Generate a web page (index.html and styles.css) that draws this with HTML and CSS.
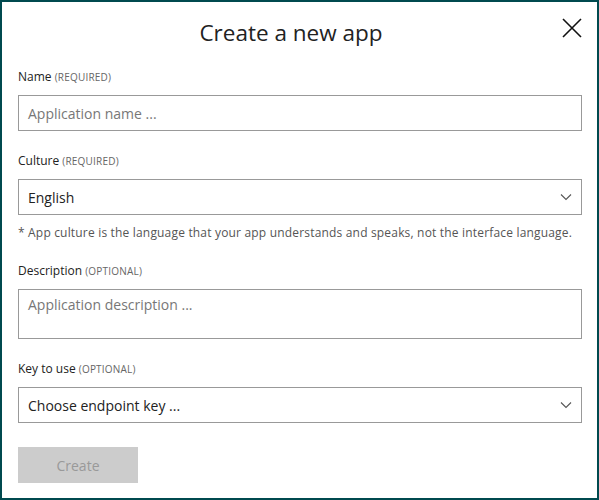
FILE: index.html
```html
<!DOCTYPE html>
<html>
<head>
<meta charset="utf-8">
<link rel="stylesheet" href="styles.css">
</head>
<body>
<div class="dialog">
  <div class="header">
    <h1 class="title">Create a new app</h1>
    <button class="close" aria-label="Close">
      <svg width="20" height="20" viewBox="0 0 20 20"><path d="M1 1 L19 19 M19 1 L1 19" stroke="#111" stroke-width="1.6" fill="none"/></svg>
    </button>
  </div>
  <div class="field">
    <div class="label">Name <span class="tag">(REQUIRED)</span></div>
    <div class="input placeholder">Application name ...</div>
  </div>
  <div class="field culture">
    <div class="label">Culture <span class="tag">(REQUIRED)</span></div>
    <div class="input select">English<svg class="chev" width="12" height="8" viewBox="0 0 12 8"><path d="M1 1.5 L6 6.5 L11 1.5" stroke="#555" stroke-width="1.1" fill="none"/></svg></div>
    <p class="note">* App culture is the language that your app understands and speaks, not the interface language.</p>
  </div>
  <div class="field">
    <div class="label">Description <span class="tag">(OPTIONAL)</span></div>
    <div class="input textarea placeholder">Application description ...</div>
  </div>
  <div class="field key">
    <div class="label">Key to use <span class="tag">(OPTIONAL)</span></div>
    <div class="input select">Choose endpoint key ...<svg class="chev" width="12" height="8" viewBox="0 0 12 8"><path d="M1 1.5 L6 6.5 L11 1.5" stroke="#555" stroke-width="1.1" fill="none"/></svg></div>
  </div>
  <button class="create">Create</button>
</div>
</body>
</html>
```

FILE: styles.css
```css
* { box-sizing: border-box; }
html, body { margin: 0; padding: 0; background: #fff; }
body { font-family: "Open Sans", "Noto Sans", sans-serif; color: #222; }
.dialog {
  width: 599px;
  height: 500px;
  border: 2px solid #004a4f;
  padding: 0 15px 0 16px;
  overflow: hidden;
}
.header {
  position: relative;
  height: 57px;
  display: flex;
  align-items: center;
  justify-content: center;
  padding-right: 18px;
}
.title {
  margin: 0;
  font-weight: 400;
  font-size: 22.5px;
  line-height: 30px;
  color: #222;
  padding-top: 5px;
}
.close {
  position: absolute;
  right: 0;
  top: 16px;
  border: 0;
  background: none;
  padding: 0;
  width: 20px;
  height: 20px;
}
.field { display: block; }
.culture { margin-top: 12px; }
.key { margin-top: 12px; }
.label {
  font-size: 12px;
  color: #222;
  height: 36px;
  line-height: 16px;
  padding-top: 10px;
}
.tag { font-size: 10px; color: #666; letter-spacing: 0.2px; }
.input {
  height: 36px;
  border: 1px solid #999;
  padding: 0 9px;
  font-size: 14px;
  display: flex;
  align-items: center;
  color: #222;
}
.placeholder { color: #777; }
.select { justify-content: space-between; }
.textarea { height: 50px; align-items: flex-start; padding-top: 5px; }
.note {
  margin: 0;
  font-size: 12px;
  line-height: 16px;
  color: #555;
  padding-top: 10px;
  height: 38px;
  white-space: nowrap;
  letter-spacing: 0.18px;
}
.create {
  display: block;
  margin-top: 24px;
  width: 120px;
  height: 36px;
  border: 0;
  background: #cccccc;
  color: #999;
  font-family: inherit;
  font-size: 14px;
}
```
